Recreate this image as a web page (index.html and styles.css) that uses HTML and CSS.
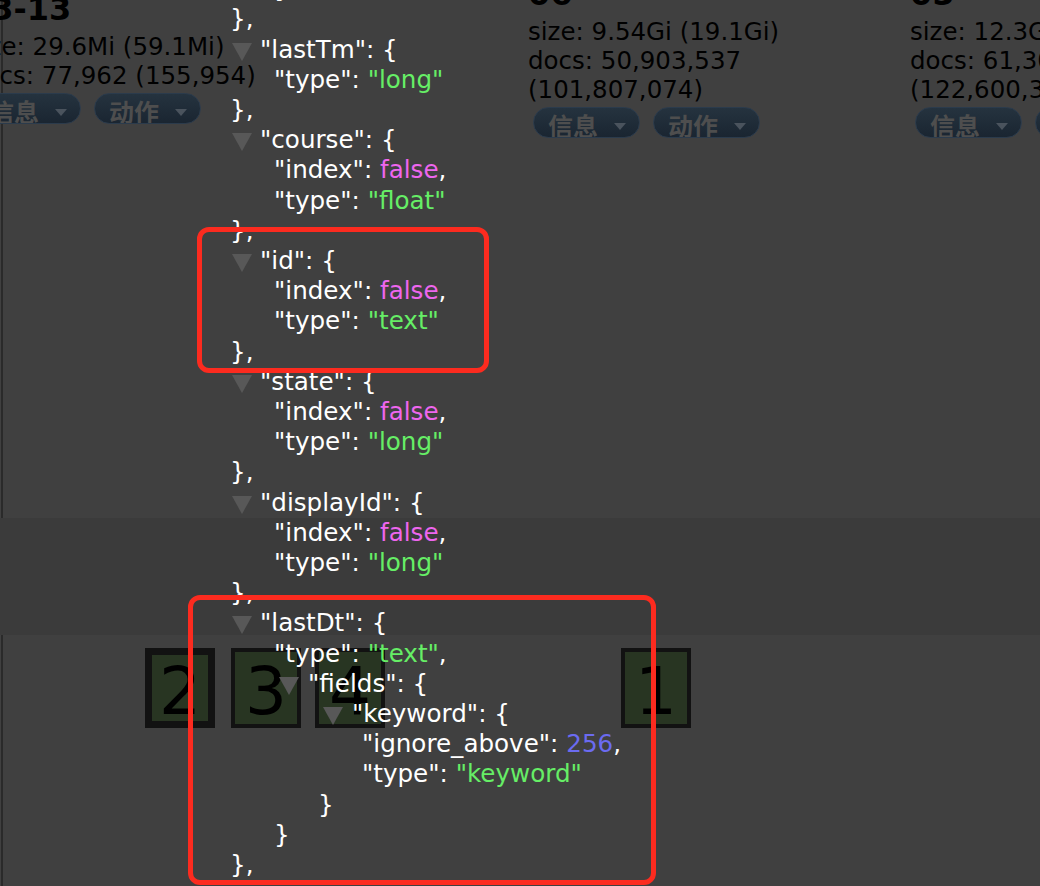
FILE: index.html
```html
<!DOCTYPE html>
<html lang="zh-CN">
<head>
<meta charset="utf-8">
<title>Index mapping</title>
<link rel="stylesheet" href="styles.css">
</head>
<body>
<div class="page">
  <div class="top">
    <div class="cards">
      <div class="card card-a">
        <div class="title">03-13</div>
        <div class="stat">size: 29.6Mi (59.1Mi)</div>
        <div class="stat">docs: 77,962 (155,954)</div>
        <div class="btns">
          <span class="pill">信息<i class="caret"></i></span>
          <span class="pill">动作<i class="caret"></i></span>
        </div>
      </div>
      <div class="card card-b">
        <div class="title">06</div>
        <div class="stat">size: 9.54Gi (19.1Gi)</div>
        <div class="stat">docs: 50,903,537</div>
        <div class="stat">(101,807,074)</div>
        <div class="btns">
          <span class="pill">信息<i class="caret"></i></span>
          <span class="pill">动作<i class="caret"></i></span>
        </div>
      </div>
      <div class="card card-c">
        <div class="title">05</div>
        <div class="stat">size: 12.3Gi (24.6Gi)</div>
        <div class="stat">docs: 61,300,178</div>
        <div class="stat">(122,600,356)</div>
        <div class="btns">
          <span class="pill">信息<i class="caret"></i></span>
          <span class="pill">动作<i class="caret"></i></span>
        </div>
      </div>
    </div>
  </div>
  <div class="band"></div>
  <div class="shards">
    <div class="shard primary">2</div>
    <div class="shard s3">3</div>
    <div class="shard s4">4</div>
    <div class="shard s1">1</div>
  </div>
</div>

<div class="json">
  <div class="ln in2">}</div>
  <div class="ln">},</div>
  <div class="prop">
    <div class="ln"><span class="tog"></span>"lastTm": {</div>
    <div class="kids">
      <div class="ln">"type": <span class="str">"long"</span></div>
    </div>
    <div class="ln">},</div>
  </div>
  <div class="prop">
    <div class="ln"><span class="tog"></span>"course": {</div>
    <div class="kids">
      <div class="ln">"index": <span class="bool">false</span>,</div>
      <div class="ln">"type": <span class="str">"float"</span></div>
    </div>
    <div class="ln">},</div>
  </div>
  <div class="prop">
    <div class="ln"><span class="tog"></span>"id": {</div>
    <div class="kids">
      <div class="ln">"index": <span class="bool">false</span>,</div>
      <div class="ln">"type": <span class="str">"text"</span></div>
    </div>
    <div class="ln">},</div>
  </div>
  <div class="prop">
    <div class="ln"><span class="tog"></span>"state": {</div>
    <div class="kids">
      <div class="ln">"index": <span class="bool">false</span>,</div>
      <div class="ln">"type": <span class="str">"long"</span></div>
    </div>
    <div class="ln">},</div>
  </div>
  <div class="prop">
    <div class="ln"><span class="tog"></span>"displayId": {</div>
    <div class="kids">
      <div class="ln">"index": <span class="bool">false</span>,</div>
      <div class="ln">"type": <span class="str">"long"</span></div>
    </div>
    <div class="ln">},</div>
  </div>
  <div class="prop">
    <div class="ln"><span class="tog"></span>"lastDt": {</div>
    <div class="kids">
      <div class="ln">"type": <span class="str">"text"</span>,</div>
      <div class="prop">
        <div class="ln"><span class="tog"></span>"fields": {</div>
        <div class="kids">
          <div class="prop">
            <div class="ln"><span class="tog"></span>"keyword": {</div>
            <div class="kids">
              <div class="ln">"ignore_above": <span class="num">256</span>,</div>
              <div class="ln">"type": <span class="str">"keyword"</span></div>
            </div>
            <div class="ln">}</div>
          </div>
        </div>
        <div class="ln">}</div>
      </div>
    </div>
    <div class="ln">},</div>
  </div>
</div>

<div class="mark mark-id"></div>
<div class="mark mark-lastdt"></div>
</body>
</html>
```

FILE: styles.css
```css
* { box-sizing: border-box; }

html, body { margin: 0; padding: 0; }

body {
  width: 1040px;
  height: 886px;
  overflow: hidden;
  position: relative;
  background: linear-gradient(#2a2a2a, #2a2a2a) 1px 0 / 2px 100% no-repeat, #404040;
  font-family: "DejaVu Sans", Verdana, sans-serif;
  color: #000;
}

/* underlying (dimmed) page */
.top { height: 518px; display: flow-root; }

.cards {
  display: flex;
  align-items: center;
  margin: -29px 0 0 -31px;
  white-space: nowrap;
}

.card { flex: none; }
.card-a { width: 559px; }
.card-b { width: 382px; }

.title { font-weight: bold; font-size: 32px; line-height: 46px; }
.stat { font-size: 24.5px; line-height: 29px; }

.btns { display: flex; gap: 13px; margin: 3px 0 0 5px; }

.pill {
  display: flex;
  align-items: flex-start;
  height: 31px;
  padding: 5px 13px 0 14px;
  border-radius: 16px;
  border: 1px solid #2b3b4c;
  background: linear-gradient(#25333f, #1a2531);
  color: #4e4e4e;
  font: bold 25px/24px "Noto Sans CJK SC", sans-serif;
  overflow: hidden;
}

.caret {
  width: 0;
  height: 0;
  border-left: 6.5px solid transparent;
  border-right: 6.5px solid transparent;
  border-top: 7px solid #4a535d;
  margin: 10px 0 0 16px;
}

.band { height: 117px; background: #3b3b3b; }

.shards { display: flex; margin-top: 13px; padding-left: 145px; }

.shard {
  flex: none;
  width: 70px;
  height: 80px;
  border: 4px solid #121212;
  background: #283522;
  font-size: 66px;
  line-height: 72px;
  text-align: center;
  padding-top: 4px;
  overflow: hidden;
}
.shard.primary { border-width: 7px; padding-top: 1px; }
.s3 { margin-left: 16px; }
.s4 { margin-left: 14px; }
.s1 { margin-left: 236px; }

/* JSON viewer overlay */
.json {
  position: absolute;
  top: -25.8px;
  left: 230px;
  font-size: 24.6px;
  line-height: 30.2px;
  color: #fff;
  white-space: nowrap;
}

.kids, .in2 { padding-left: 44px; }

.str { color: #66ee66; }
.bool { color: #ee66ee; }
.num { color: #6b6bf0; }

.tog {
  display: inline-block;
  width: 30px;
  height: 0;
  position: relative;
}
.tog::before {
  content: "";
  position: absolute;
  left: 2px;
  top: -15px;
  border-top: 18px solid #585858;
  border-left: 10px solid transparent;
  border-right: 10px solid transparent;
}
.kids .tog { width: 34px; }
.kids .tog::before { left: 5px; }

/* annotation boxes */
.mark {
  position: absolute;
  border: 5px solid #fc2b1f;
  border-radius: 12px;
}
.mark-id { left: 197px; top: 227px; width: 292px; height: 146px; }
.mark-lastdt { left: 188px; top: 595px; width: 468px; height: 290px; }
```
